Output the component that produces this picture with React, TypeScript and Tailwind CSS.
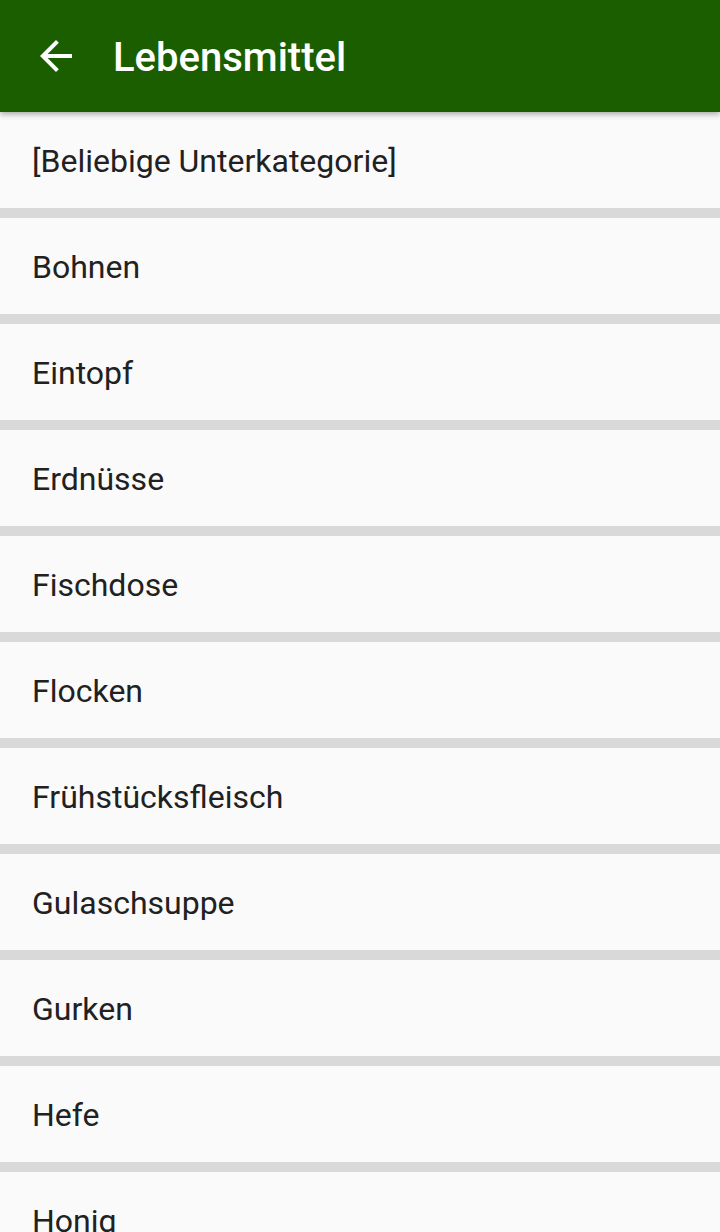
const items = [
  "[Beliebige Unterkategorie]",
  "Bohnen",
  "Eintopf",
  "Erdnüsse",
  "Fischdose",
  "Flocken",
  "Frühstücksfleisch",
  "Gulaschsuppe",
  "Gurken",
  "Hefe",
  "Honig",
];

export default function App() {
  return (
    <div className="w-[720px] h-[1232px] overflow-hidden bg-[#d9d9d9] font-['Roboto',sans-serif]">
      <div className="relative z-10 h-[112px] bg-[#1b5e00] flex items-center shadow-[0_2px_6px_rgba(0,0,0,0.35)]">
        <div className="w-[113px] flex justify-start pl-[40px]">
          <svg width="32" height="32" viewBox="0 0 16 16" fill="#ffffff">
            <path d="M16 7H3.83l5.59-5.59L8 0 0 8l8 8 1.41-1.41L3.83 9H16z" />
          </svg>
        </div>
        <h1 className="text-white text-[40px] font-medium leading-none pt-[4px]">Lebensmittel</h1>
      </div>
      <div className="flex flex-col gap-[10px]">
        {items.map((item) => (
          <div key={item} className="h-[96px] shrink-0 bg-[#fafafa] flex items-center px-[32px] pt-[2px]">
            <span className="text-[32px] text-[#212121] leading-none">{item}</span>
          </div>
        ))}
      </div>
    </div>
  );
}
